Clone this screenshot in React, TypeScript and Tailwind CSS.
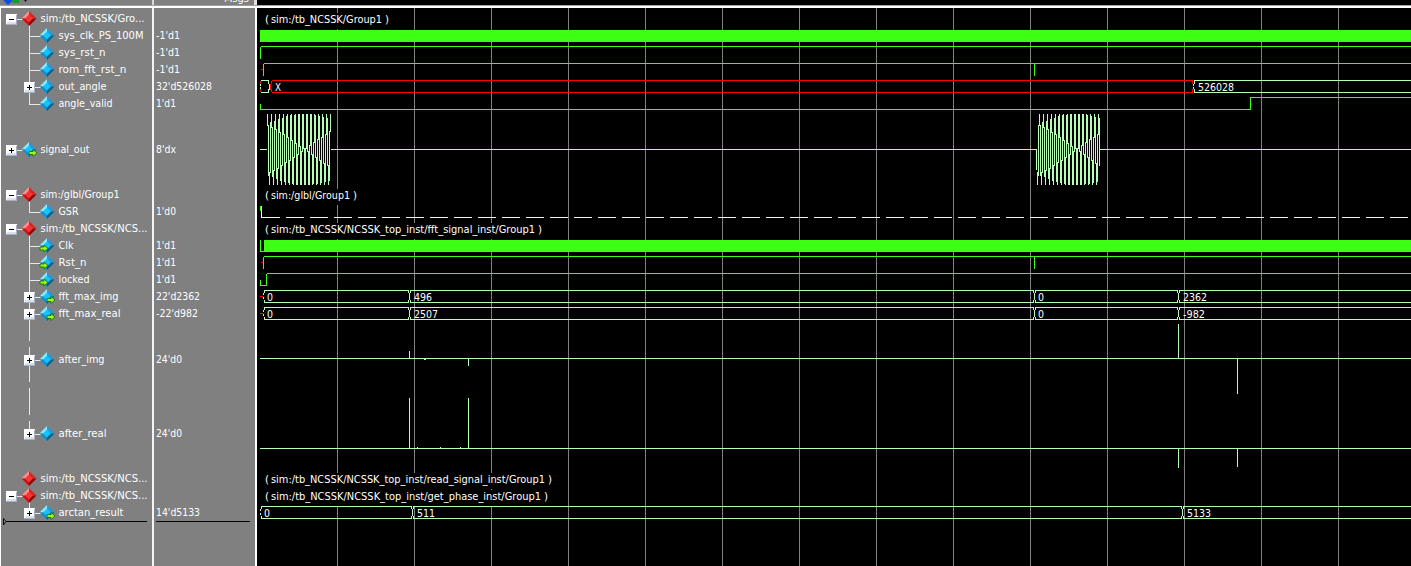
import React from "react";

type Icon = "group" | "net" | "in" | "out";
type Row = {
  name: string;
  value?: string;
  icon: Icon;
  level: 0 | 1;
  box?: "+" | "-";
  tall?: boolean;
  // vertical tree segments in row coordinates
  trunk?: [number, number][];
  width: number;
  valueWidth?: number;
};

const ROWS: Row[] = [
  { name: "sim:/tb_NCSSK/Gro...", icon: "group", level: 0, box: "-", trunk: [[14, 17]], width: 104 },
  { name: "sys_clk_PS_100M", value: "-1'd1", icon: "net", level: 1, trunk: [[0, 17]], width: 85, valueWidth: 24 },
  { name: "sys_rst_n", value: "-1'd1", icon: "net", level: 1, trunk: [[0, 17]], width: 47, valueWidth: 24 },
  { name: "rom_fft_rst_n", value: "-1'd1", icon: "net", level: 1, trunk: [[0, 17]], width: 68, valueWidth: 24 },
  { name: "out_angle", value: "32'd526028", icon: "net", level: 1, box: "+", trunk: [[0, 17]], width: 48, valueWidth: 56 },
  { name: "angle_valid", value: "1'd1", icon: "net", level: 1, trunk: [[0, 10]], width: 54, valueWidth: 20 },
  { name: "signal_out", value: "8'dx", icon: "out", level: 0, box: "+", tall: true, width: 49, valueWidth: 20 },
  { name: "sim:/glbl/Group1", icon: "group", level: 0, box: "-", trunk: [[14, 17]], width: 79 },
  { name: "GSR", value: "1'd0", icon: "net", level: 1, trunk: [[0, 10]], width: 20, valueWidth: 20 },
  { name: "sim:/tb_NCSSK/NCS...", icon: "group", level: 0, box: "-", trunk: [[14, 17]], width: 107 },
  { name: "Clk", value: "1'd1", icon: "in", level: 1, trunk: [[0, 17]], width: 15, valueWidth: 20 },
  { name: "Rst_n", value: "1'd1", icon: "in", level: 1, trunk: [[0, 17]], width: 28, valueWidth: 20 },
  { name: "locked", value: "1'd1", icon: "in", level: 1, trunk: [[0, 17]], width: 31, valueWidth: 20 },
  { name: "fft_max_img", value: "22'd2362", icon: "out", level: 1, box: "+", trunk: [[0, 17]], width: 60, valueWidth: 44 },
  { name: "fft_max_real", value: "-22'd982", icon: "out", level: 1, box: "+", trunk: [[0, 17]], width: 62, valueWidth: 42 },
  { name: "after_img", value: "24'd0", icon: "net", level: 1, box: "+", tall: true, trunk: [[0, 19], [25, 60], [66, 74]], width: 46, valueWidth: 26 },
  { name: "after_real", value: "24'd0", icon: "net", level: 1, box: "+", tall: true, trunk: [[0, 19], [25, 37]], width: 48, valueWidth: 26 },
  { name: "sim:/tb_NCSSK/NCS...", icon: "group", level: 0, width: 107 },
  { name: "sim:/tb_NCSSK/NCS...", icon: "group", level: 0, box: "-", trunk: [[14, 17]], width: 107 },
  { name: "arctan_result", value: "14'd5133", icon: "out", level: 1, box: "+", trunk: [[0, 9]], width: 65, valueWidth: 44 },
];

const FONT = "[font-family:'DejaVu_Sans_Condensed','DejaVu_Sans','Noto_Sans',sans-serif] [font-stretch:condensed]";

function Label({ text, width, x = 0, y = 12, fill = "#ffffff" }: { text: string; width: number; x?: number; y?: number; fill?: string }) {
  return (
    <text x={x} y={y} fill={fill} textLength={width} lengthAdjust="spacingAndGlyphs" className="text-[11px]">
      {text}
    </text>
  );
}

function Diamond({ x, y, red }: { x: number; y: number; red?: boolean }) {
  const c = red ? ["#ff8f8f", "#e02020", "#d01010", "#8c0000", "#f23535"] : ["#8fe6ff", "#1f9ade", "#168ccc", "#00608c", "#12c4fa"];
  return (
    <g transform={`translate(${x} ${y})`}>
      <path d="M-7.5 0L0 -7.5V0Z" fill={c[0]} />
      <path d="M0 -7.5L7.5 0H0Z" fill={c[1]} />
      <path d="M-7.5 0L0 7.5V0Z" fill={c[2]} />
      <path d="M7.5 0L0 7.5V0Z" fill={c[3]} />
      <path d="M0 -4L4 0L0 4L-4 0Z" fill={c[4]} />
    </g>
  );
}

function Gutter({ row }: { row: Row }) {
  const h = row.tall ? 74 : 17;
  const cy = h / 2;
  const top = Math.floor(cy);
  const ix = row.level ? 46.5 : 28.5;
  const bx = row.level ? 29 : 11;
  const arrow = "M0 2H4V0L8 3.5L4 7V5H0Z";
  return (
    <svg viewBox={`1 0 ${row.level ? 57 : 39} ${h}`} width={row.level ? 57 : 39} height={h} className="block shrink-0">
      <g stroke="#e8e8e8" shapeRendering="crispEdges">
        {row.trunk?.map(([a, b]) => <path key={a} d={`M29.5 ${a}V${b}`} />)}
        {(row.level === 1 || row.box) && <path d={`M${bx} ${top + 1.5}H${ix - 6}`} />}
      </g>
      {row.box && (
        <g shapeRendering="crispEdges">
          <rect x={bx - 5} y={top - 4} width={11} height={11} fill="#fff" />
          <rect x={bx - 4} y={top + 4} width={9} height={2} fill="#dcdfee" />
          <path d={`M${bx - 5} ${top + 6.5}H${bx + 6}M${bx + 5.5} ${top - 3}V${top + 7}`} stroke="#a9afc5" />
          <path d={`M${bx - 2} ${top + 1.5}H${bx + 3}`} stroke="#000" />
          {row.box === "+" && <path d={`M${bx + 0.5} ${top - 1}V${top + 4}`} stroke="#000" />}
        </g>
      )}
      <Diamond x={ix + 0.5} y={top + 0.5} red={row.icon === "group"} />
      {row.icon === "out" && <path transform={`translate(${ix + 0.5} ${top + 0.5})`} d={arrow} fill="#a8f01c" stroke="#0c7a0c" strokeWidth=".9" />}
      {row.icon === "in" && <path transform={`translate(${ix - 6.5} ${top})`} d={arrow} fill="#a8f01c" stroke="#0c7a0c" strokeWidth=".9" />}
    </svg>
  );
}

const GREEN = "#3cff14";
const PALE = "#b4ffb4";

function Burst({ start, end, peak }: { start: number; end: number; peak: number }) {
  let d = "";
  for (let x = start; x <= end; x++) {
    let lo = 1;
    let hi = -1;
    for (let i = 0; i <= 8; i++) {
      const v = Math.cos((2 * Math.PI * (x + i / 8 - peak)) / 3.947);
      lo = Math.min(lo, v);
      hi = Math.max(hi, v);
    }
    d += `M${x + 0.5} ${Math.round(149 - 35 * hi)}V${Math.round(150 - 35 * lo)}`;
  }
  return <path d={d} stroke={PALE} />;
}

function bus(top: number, from: number, changes: number[], to: number) {
  const b = top + 12;
  let d = `M${from + 1.5} ${top}v3m-1 0v2m0 2v2m1 1v3`;
  const edges = [from, ...changes, to];
  for (let i = 0; i < edges.length - 1; i++) {
    const a = edges[i] + 1;
    const z = edges[i + 1];
    d += `M${a} ${top + 0.5}H${z}M${a} ${b + 0.5}H${z}`;
  }
  for (const c of changes) {
    d += `M${c - 0.5} ${top}v3m1 0v7m-1 0v3M${c + 1.5} ${top}v3m0 7v3`;
  }
  return d;
}

const GROUPS: [string, number, number][] = [
  ["sim:/tb_NCSSK/Group1", 13, 124],
  ["sim:/glbl/Group1", 189, 92],
  ["sim:/tb_NCSSK/NCSSK_top_inst/fft_signal_inst/Group1", 223, 277],
  ["sim:/tb_NCSSK/NCSSK_top_inst/read_signal_inst/Group1", 473, 287],
  ["sim:/tb_NCSSK/NCSSK_top_inst/get_phase_inst/Group1", 490, 283],
];

const VALUES: [string, number, number, number][] = [
  ["X", 275, 91, 6],
  ["526028", 1198, 91, 36],
  ["0", 267, 301, 6],
  ["496", 414, 301, 18],
  ["0", 1038, 301, 6],
  ["2362", 1183, 301, 24],
  ["0", 267, 318, 6],
  ["2507", 414, 318, 24],
  ["0", 1038, 318, 6],
  ["-982", 1183, 318, 22],
  ["0", 264, 517, 6],
  ["511", 417, 517, 18],
  ["5133", 1187, 517, 24],
];

function Waves() {
  return (
    <svg viewBox="257 8 1154 558" width="1154" height="558" className="block">
      <g fill="none" shapeRendering="crispEdges">
        <path d={Array.from({ length: 14 }, (_, i) => `M${337.5 + 77 * i} 8V566`).join("")} stroke="#808080" />
        {GROUPS.map(([, y, w]) => <rect key={y} x="264" y={y} width={w + 3} height="16" fill="#000" />)}
        <path d="M260 30H1411V42H260ZM264 240H1411V252H264Z" fill={GREEN} />
        <path
          stroke={GREEN}
          d="M260.5 47V59M261 46.5H1411M263.5 64V76M264 63.5H1411M1034.5 64V76M260.5 104V109M260 109.5H1251M1250.5 98V109M1250 97.5H1411M260.5 240V252M260 251.5H264M263.5 257V269M264 256.5H1411M1034.5 257V269M260.5 280V285M260 285.5H267M266.5 274V285M267 273.5H1411M260.5 206V211"
        />
        <path stroke="#f8fff8" d="M261.5 206V218" />
        <path stroke="#f0f0f0" strokeDasharray="18 6" d="M262 217.5H1411" />
        <path stroke="#ff0000" d="M261 69.5H263M261 262.5H263M260 296.5H263M260 313.5H263M272 80.5H1193M272 92.5H1193M271.5 81V84M270.5 84V90M271.5 89V92M1192.5 81V84M1192.5 89V92M260.5 81V84M260.5 89V92" />
        <path stroke={PALE} d="M261 80.5H269M261 92.5H269M260.5 84V86M260.5 87V89M268.5 81V84M269.5 84V90M268.5 89V92M1193.5 84V86M1193.5 87V89M1194.5 80V84M1194.5 89V93M1195 80.5H1411M1195 92.5H1411" />
        <path stroke={PALE} d="M260 149.5H267M331 149.5H1036M1100 149.5H1411" />
        <Burst start={267} end={330} peak={267.5} />
        <Burst start={1037} end={1099} peak={1039.5} />
        <path stroke={PALE} d="M1036.5 149V170" />
        <path stroke={PALE} d={bus(290, 263, [409, 1034, 1178], 1411) + bus(307, 263, [409, 1034, 1178], 1411) + bus(506, 260, [412, 1182], 1411)} />
        <path stroke={PALE} d="M260 358.5H1411M409.5 351V358M424 359.5H426M468.5 359V366M1178.5 324V358M1237.5 359V394" />
        <path stroke={PALE} d="M260 448.5H1411M409.5 398V448M417 447.5H418M440 447.5H441M460 447.5H461M468.5 398V448M1178.5 449V468M1237.5 449V467" />
      </g>
      {GROUPS.map(([t, y, w]) => (
        <g key={y}>
          <Label text="(" x={265} y={y + 10} width={4} />
          <Label text={t} x={271} y={y + 10} width={w - 13} />
          <Label text=")" x={261 + w} y={y + 10} width={4} />
        </g>
      ))}
      {VALUES.map(([t, x, y, w]) => <Label key={`${x}-${y}`} text={t} x={x} y={y} width={w} />)}
    </svg>
  );
}

export default function App() {
  return (
    <div className={`flex h-[566px] w-[1411px] flex-col overflow-hidden bg-black ${FONT}`}>
      <div className="flex h-[5px] shrink-0">
        <div className="flex w-[152px] bg-[#808080]">
          <svg width="30" height="5" className="block">
            <path d="M3 0H14L8 5Z" fill="#0a50e8" />
            <path d="M12 0H19V3H13Z" fill="#169c28" />
            <path d="M24 0H27L25.5 2Z" fill="#111" />
          </svg>
        </div>
        <div className="w-[2px] bg-[#d8d8d8]" />
        <div className="w-[100px] bg-[#808080]">
          <svg width="100" height="5" className="block overflow-hidden">
            <Label text="Msgs" x={70} y={2} width={25} />
          </svg>
        </div>
        <div className="w-[3px] bg-[#e0e0e0]" />
      </div>
      <div className="h-[1px] shrink-0 bg-[#a0a0a0]" />
      <div className="h-[2px] shrink-0 bg-white" />
      <div className="flex flex-1">
        <div className="flex w-[154px] shrink-0 flex-col border-l border-r-2 border-l-white border-r-[#f4f4f4] bg-[#808080] pt-[2px]">
          {ROWS.map((row, i) => (
            <div key={i} className={`flex shrink-0 items-center ${row.tall ? "h-[74px]" : "h-[17px]"}`}>
              <Gutter row={row} />
              <svg width={row.width + 2} height="17" className="block shrink-0">
                <Label text={row.name} x={0.5} width={row.width} />
              </svg>
            </div>
          ))}
          <svg width="150" height="8" className="-mt-[3px] block shrink-0">
            <path d="M2.5 .5V7L5 3.5Z" fill="none" stroke="#111" />
            <path d="M5 3.5H146" stroke="#000" shapeRendering="crispEdges" />
          </svg>
        </div>
        <div className="flex w-[103px] shrink-0 flex-col border-r-2 border-r-white bg-[#808080] pt-[2px]">
          {ROWS.map((row, i) => (
            <div key={i} className={`flex shrink-0 items-center pl-[2px] ${row.tall ? "h-[74px]" : "h-[17px]"}`}>
              {row.value && (
                <svg width="90" height="17" className="block shrink-0">
                  <Label text={row.value} width={row.valueWidth ?? 20} />
                </svg>
              )}
            </div>
          ))}
          <div className="ml-[2px] h-px w-[94px] bg-black" />
        </div>
        <Waves />
      </div>
    </div>
  );
}
